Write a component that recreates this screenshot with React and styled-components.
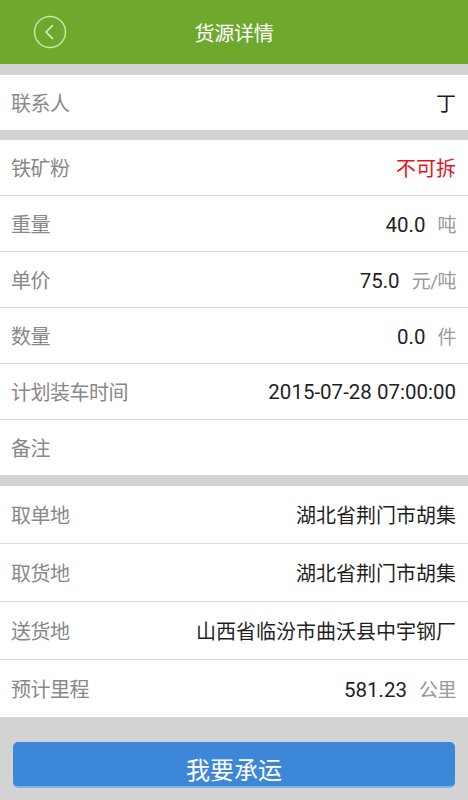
import React from "react";
import styled, { createGlobalStyle } from "styled-components";

const GlobalStyle = createGlobalStyle`
  html, body {
    margin: 0;
    padding: 0;
    background: #d3d3d3;
  }
  body {
    font-family: Roboto, "Noto Sans CJK SC", sans-serif;
  }
  * { box-sizing: border-box; }
`;

const Page = styled.div`
  width: 468px;
  min-height: 800px;
  background: #d3d3d3;
  display: flex;
  flex-direction: column;
`;

const Header = styled.header`
  height: 64px;
  background: #6ea92e;
  display: flex;
  align-items: center;
  justify-content: center;
  position: relative;
`;

const BackButton = styled.button`
  position: absolute;
  left: 33px;
  top: 15px;
  width: 34px;
  height: 34px;
  padding: 0;
  border: none;
  background: transparent;
  display: flex;
  align-items: center;
  justify-content: center;
`;

const Title = styled.h1`
  margin: 0;
  color: #ffffff;
  font-size: 20px;
  font-weight: 400;
  letter-spacing: -0.3px;
`;

const Group = styled.section`
  background: #ffffff;
  margin-top: ${(p) => p.$gap}px;
  display: flex;
  flex-direction: column;
`;

const Row = styled.div`
  height: ${(p) => p.$h}px;
  display: flex;
  align-items: center;
  justify-content: space-between;
  padding: 0 12px 0 11px;
  & + & {
    border-top: 1px solid #dadada;
  }
`;

const Label = styled.span`
  color: #888888;
  font-size: 20px;
  letter-spacing: -0.5px;
`;

const Value = styled.span`
  color: ${(p) => (p.$red ? "#e3121b" : "#1f1f1f")};
  font-size: ${(p) => (p.$cjk ? "20px" : "20.5px")};
  display: flex;
  align-items: baseline;
`;

const Unit = styled.span`
  color: #999999;
  font-size: 19px;
  margin-left: 12px;
  letter-spacing: -0.5px;
`;

const Footer = styled.div`
  padding: 25px 13px 11px;
`;

const PrimaryButton = styled.button`
  width: 100%;
  height: 46px;
  border: none;
  border-radius: 5px;
  background: #3d87d9;
  border-bottom: 2px solid #7fb0e6;
  color: #ffffff;
  font-family: Roboto, "Noto Sans CJK SC", sans-serif;
  font-size: 24px;
  display: flex;
  align-items: center;
  justify-content: center;
  padding: 8px 0 0;
`;

const BackIcon = () => (
  <svg width="34" height="34" viewBox="0 0 34 34">
    <circle cx="17" cy="17" r="15.5" fill="none" stroke="#c9e7a3" strokeWidth="1.5" />
    <path d="M19.5 10.5 L13 17 L19.5 23.5" fill="none" stroke="#e4f3cf" strokeWidth="1.5" strokeLinecap="round" strokeLinejoin="round" />
  </svg>
);

const cargoRows = [
  { label: "铁矿粉", value: "不可拆", red: true, cjk: true },
  { label: "重量", value: "40.0", unit: "吨" },
  { label: "单价", value: "75.0", unit: "元/吨" },
  { label: "数量", value: "0.0", unit: "件" },
  { label: "计划装车时间", value: "2015-07-28 07:00:00" },
  { label: "备注", value: "" },
];

const placeRows = [
  { label: "取单地", value: "湖北省荆门市胡集", cjk: true },
  { label: "取货地", value: "湖北省荆门市胡集", cjk: true },
  { label: "送货地", value: "山西省临汾市曲沃县中宇钢厂", cjk: true },
  { label: "预计里程", value: "581.23", unit: "公里" },
];

const DetailRow = ({ h, label, value, unit, red, cjk }) => (
  <Row $h={h}>
    <Label>{label}</Label>
    <Value $red={red} $cjk={cjk}>
      {value}
      {unit && <Unit>{unit}</Unit>}
    </Value>
  </Row>
);

export default function App() {
  return (
    <Page>
      <GlobalStyle />
      <Header>
        <BackButton aria-label="返回">
          <BackIcon />
        </BackButton>
        <Title>货源详情</Title>
      </Header>
      <Group $gap={11}>
        <DetailRow h={55} label="联系人" value="丁" cjk />
      </Group>
      <Group $gap={10}>
        {cargoRows.map((r) => (
          <DetailRow key={r.label} h={r.label === "铁矿粉" ? 55 : 56} {...r} />
        ))}
      </Group>
      <Group $gap={11}>
        {placeRows.map((r) => (
          <DetailRow key={r.label} h={r.label === "取单地" ? 57 : 58} {...r} />
        ))}
      </Group>
      <Footer>
        <PrimaryButton>我要承运</PrimaryButton>
      </Footer>
    </Page>
  );
}
